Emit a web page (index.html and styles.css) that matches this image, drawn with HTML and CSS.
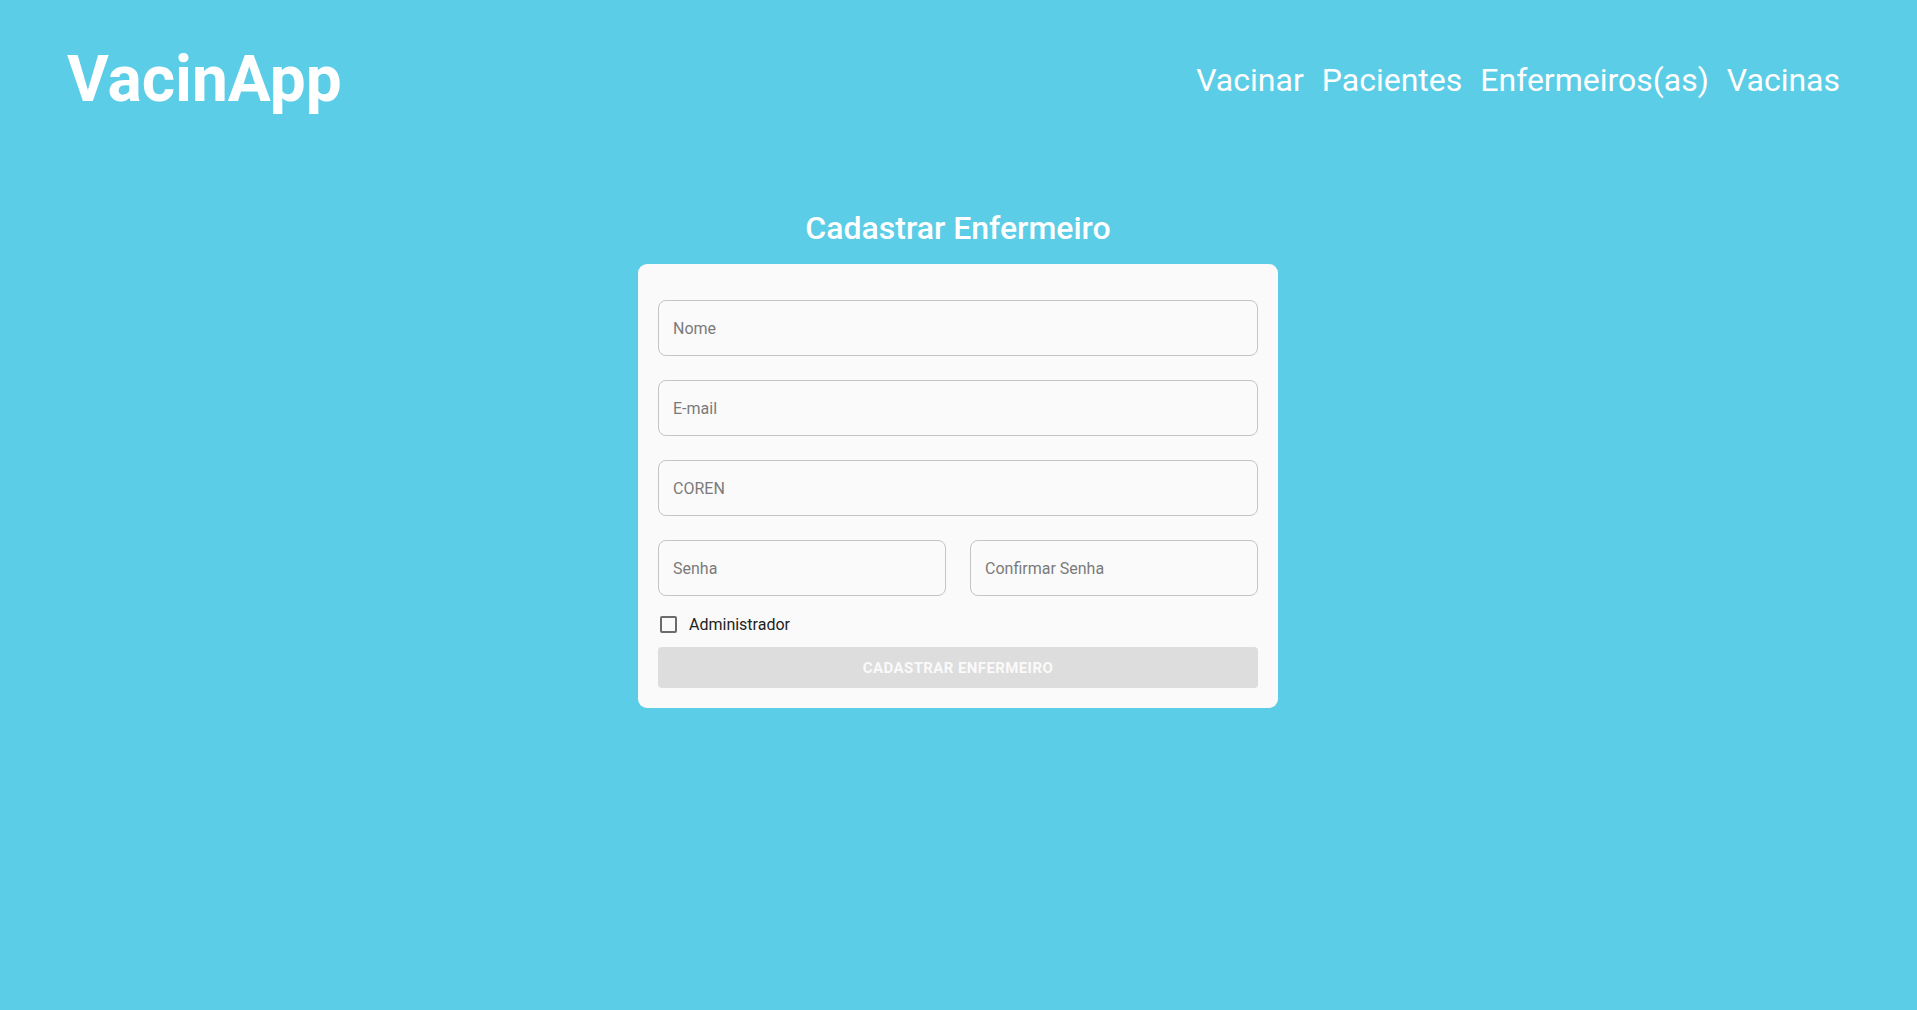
FILE: index.html
```html
<!DOCTYPE html>
<html lang="pt-BR">
<head>
<meta charset="utf-8">
<title>VacinApp</title>
<link rel="stylesheet" href="styles.css">
</head>
<body>
<header class="topbar">
  <div class="logo">VacinApp</div>
  <nav class="nav">
    <a class="nav-link" href="#">Vacinar</a>
    <a class="nav-link" href="#">Pacientes</a>
    <a class="nav-link" href="#">Enfermeiros(as)</a>
    <a class="nav-link" href="#">Vacinas</a>
  </nav>
</header>
<main class="content">
  <h2 class="page-title">Cadastrar Enfermeiro</h2>
  <form class="card">
    <div class="fields">
      <input class="field" type="text" placeholder="Nome">
      <input class="field" type="text" placeholder="E-mail">
      <input class="field" type="text" placeholder="COREN">
      <div class="field-row">
        <input class="field" type="password" placeholder="Senha">
        <input class="field" type="password" placeholder="Confirmar Senha">
      </div>
    </div>
    <label class="check-row">
      <span class="check-box"></span>
      <span class="check-label">Administrador</span>
    </label>
    <button class="submit" type="button" disabled>Cadastrar Enfermeiro</button>
  </form>
</main>
</body>
</html>
```

FILE: styles.css
```css
* { box-sizing: border-box; }

html, body {
  margin: 0;
  padding: 0;
}

body {
  background: #5ccde6;
  font-family: Roboto, "Liberation Sans", Arial, sans-serif;
  min-height: 1010px;
}

.topbar {
  display: flex;
  justify-content: space-between;
  align-items: center;
  padding: 42px 77px 0 67px;
}

.logo {
  color: #ffffff;
  font-weight: 700;
  font-size: 64px;
  line-height: 75px;
}

.nav {
  display: flex;
  align-items: center;
  gap: 18px;
}

.nav-link {
  color: #ffffff;
  text-decoration: none;
  font-size: 32px;
  line-height: 38px;
}

.content {
  display: flex;
  flex-direction: column;
  align-items: center;
  margin-top: 92px;
  padding-right: 1px;
}

.page-title {
  margin: 0 0 17px;
  color: #ffffff;
  font-weight: 500;
  font-size: 32px;
  line-height: 38px;
}

.card {
  width: 640px;
  background: #fafafa;
  border-radius: 9px;
  padding: 36px 20px 20px;
  display: flex;
  flex-direction: column;
}

.fields {
  display: flex;
  flex-direction: column;
  gap: 24px;
}

.field-row {
  display: grid;
  grid-template-columns: 1fr 1fr;
  gap: 24px;
}

.field {
  width: 100%;
  height: 56px;
  border: 1px solid #c4c4c4;
  border-radius: 8px;
  background: #fafafa;
  padding: 0 14px;
  font-family: inherit;
  font-size: 16px;
  color: #333;
  outline: none;
}

.field::placeholder {
  color: #7a7a7a;
}

.check-row {
  display: flex;
  align-items: center;
  height: 42px;
  margin-top: 7px;
  margin-bottom: 2px;
  padding-left: 2px;
  cursor: pointer;
}

.check-box {
  width: 17px;
  height: 17px;
  border: 2px solid #6b6b6b;
  border-radius: 2px;
  margin-right: 12px;
}

.check-label {
  font-size: 16px;
  color: #222;
}

.submit {
  height: 41px;
  width: 100%;
  border: none;
  border-radius: 4px;
  background: #dddddd;
  color: #fafafa;
  font-family: inherit;
  font-weight: 700;
  font-size: 15px;
  letter-spacing: 0.4px;
  text-transform: uppercase;
}
```
